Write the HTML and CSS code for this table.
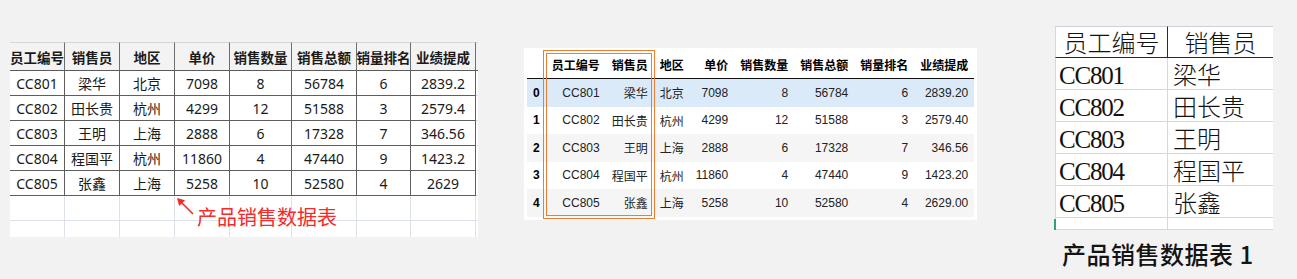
FILE: index.html
```html
<!DOCTYPE html>
<html lang="zh">
<head>
<meta charset="utf-8">
<title>产品销售数据表</title>
<link rel="stylesheet" href="styles.css">
</head>
<body>
<div class="page">
  <section class="xl">
    <div class="xl-grid">
      <div class="h">员工编号</div><div class="h">销售员</div><div class="h">地区</div><div class="h">单价</div><div class="h">销售数量</div><div class="h">销售总额</div><div class="h">销量排名</div><div class="h">业绩提成</div><div class="h hx"></div>
      <div class="d">CC801</div><div class="d">梁华</div><div class="d">北京</div><div class="d">7098</div><div class="d">8</div><div class="d">56784</div><div class="d">6</div><div class="d">2839.2</div><div class="e ex"></div>
      <div class="d">CC802</div><div class="d">田长贵</div><div class="d">杭州</div><div class="d">4299</div><div class="d">12</div><div class="d">51588</div><div class="d">3</div><div class="d">2579.4</div><div class="e ex"></div>
      <div class="d">CC803</div><div class="d">王明</div><div class="d">上海</div><div class="d">2888</div><div class="d">6</div><div class="d">17328</div><div class="d">7</div><div class="d">346.56</div><div class="e ex"></div>
      <div class="d">CC804</div><div class="d">程国平</div><div class="d">杭州</div><div class="d">11860</div><div class="d">4</div><div class="d">47440</div><div class="d">9</div><div class="d">1423.2</div><div class="e ex"></div>
      <div class="d">CC805</div><div class="d">张鑫</div><div class="d">上海</div><div class="d">5258</div><div class="d">10</div><div class="d">52580</div><div class="d">4</div><div class="d">2629</div><div class="e ex"></div>
      <div class="e"></div><div class="e"></div><div class="e"></div><div class="e"></div><div class="e"></div><div class="e"></div><div class="e"></div><div class="e"></div><div class="e ex"></div>
      <div class="e"></div><div class="e"></div><div class="e"></div><div class="e"></div><div class="e"></div><div class="e"></div><div class="e"></div><div class="e"></div><div class="e ex"></div>
    </div>
    <svg class="xl-arrow" width="20" height="20" viewBox="0 0 20 20">
      <line x1="4" y1="4" x2="17" y2="17" stroke="#f02a2a" stroke-width="1.6"/>
      <polygon points="1,1 9,3.2 3.2,9" fill="#f02a2a"/>
    </svg>
    <div class="xl-label">产品销售数据表</div>
  </section>

  <section class="pd">
    <table class="df">
      <thead>
        <tr><th></th><th>员工编号</th><th>销售员</th><th>地区</th><th>单价</th><th>销售数量</th><th>销售总额</th><th>销量排名</th><th>业绩提成</th></tr>
      </thead>
      <tbody>
        <tr class="hl"><th>0</th><td>CC801</td><td>梁华</td><td>北京</td><td>7098</td><td>8</td><td>56784</td><td>6</td><td>2839.20</td></tr>
        <tr><th>1</th><td>CC802</td><td>田长贵</td><td>杭州</td><td>4299</td><td>12</td><td>51588</td><td>3</td><td>2579.40</td></tr>
        <tr><th>2</th><td>CC803</td><td>王明</td><td>上海</td><td>2888</td><td>6</td><td>17328</td><td>7</td><td>346.56</td></tr>
        <tr><th>3</th><td>CC804</td><td>程国平</td><td>杭州</td><td>11860</td><td>4</td><td>47440</td><td>9</td><td>1423.20</td></tr>
        <tr><th>4</th><td>CC805</td><td>张鑫</td><td>上海</td><td>5258</td><td>10</td><td>52580</td><td>4</td><td>2629.00</td></tr>
      </tbody>
    </table>
    <div class="sel"></div>
  </section>

  <section class="ss-wrap">
    <div class="ss">
      <div class="sh c1">员工编号</div><div class="sh c2">销售员</div>
      <div class="sd c1 code">CC801</div><div class="sd c2">梁华</div>
      <div class="sd c1 code">CC802</div><div class="sd c2">田长贵</div>
      <div class="sd c1 code">CC803</div><div class="sd c2">王明</div>
      <div class="sd c1 code">CC804</div><div class="sd c2">程国平</div>
      <div class="sd c1 code">CC805</div><div class="sd c2">张鑫</div>
      <div class="sd c1 cur"></div><div class="sd c2"></div>
    </div>
    <div class="ss-cap">产品销售数据表 1</div>
  </section>
</div>
</body>
</html>
```

FILE: styles.css
```css
html, body {
  margin: 0;
  padding: 0;
}
body {
  background: #f2f2f2;
  width: 1297px;
  height: 279px;
  overflow: hidden;
}
.page {
  display: flex;
  align-items: flex-start;
  padding-left: 10px;
}

/* ---------- left: Excel sheet ---------- */
.xl {
  position: relative;
  margin-top: 42px;
  width: 468px;
  height: 195px;
  background: #fff;
  overflow: hidden;
}
.xl-grid {
  display: grid;
  grid-template-columns: 55px 55px 55px 55px 62px 65px 54px 65px 2px;
  grid-template-rows: 29px repeat(7, 25px);
  font-family: "Noto Sans", "Noto Sans CJK SC", sans-serif;
  font-size: 14px;
  color: #1a1a1a;
}
.xl-grid > div {
  box-sizing: border-box;
  display: flex;
  align-items: center;
  justify-content: center;
  white-space: nowrap;
}
.h {
  background: #f3f3f3;
  border-top: 1px solid #d6d6d6;
  border-right: 1px solid #6e6e6e;
  border-bottom: 1px solid #5a5a5a;
  font-family: "Noto Sans CJK SC", sans-serif;
  font-weight: 700;
  font-size: 13.5px;
}
.h.hx {
  border-right: none;
  background: #f3f3f3;
}
.d {
  border-right: 1px solid #5e5e5e;
  border-bottom: 1px solid #5e5e5e;
}
.e {
  border-right: 1px solid #dde1ea;
  border-bottom: 1px solid #dde1ea;
}
.e.ex {
  border-right: none;
}
.xl-arrow {
  position: absolute;
  left: 166px;
  top: 155px;
}
.xl-label {
  position: absolute;
  left: 187px;
  top: 163px;
  font-family: "Noto Sans CJK SC", sans-serif;
  font-size: 20px;
  line-height: 24px;
  color: #f52a2a;
}

/* ---------- middle: pandas DataFrame ---------- */
.pd {
  position: relative;
  box-sizing: border-box;
  margin-left: 46px;
  margin-top: 48px;
  width: 453px;
  height: 172px;
  padding: 3px 0 0 3px;
  background: #fff;
}
.df {
  border-collapse: collapse;
  border-spacing: 0;
  font-family: "Liberation Sans", "Noto Sans CJK SC", sans-serif;
  font-size: 12px;
  color: #222;
}
.df th, .df td {
  padding: 0 6px;
  text-align: right;
  white-space: nowrap;
  vertical-align: middle;
}
.df thead th {
  height: 27px;
  border-bottom: 1px solid #111;
  font-family: "Noto Sans CJK SC", sans-serif;
  font-weight: 700;
  color: #000;
}
.df tbody th {
  font-weight: 700;
  color: #000;
}
.df tbody tr {
  height: 27px;
}
.df tbody tr:nth-child(odd) {
  height: 28px;
  background: #f5f5f5;
}
.df tbody tr.hl {
  background: #dbeaf9;
}
.sel {
  position: absolute;
  left: 19px;
  top: 2px;
  width: 112px;
  height: 169px;
  box-sizing: border-box;
  border: 1px solid #ee7d31;
}
.sel::after {
  content: "";
  position: absolute;
  inset: 2px;
  border: 1px solid #ee7d31;
}

/* ---------- right: zoomed sheet ---------- */
.ss-wrap {
  margin-left: 78px;
  margin-top: 26px;
  display: flex;
  flex-direction: column;
}
.ss {
  display: grid;
  grid-template-columns: 113px 105px;
  grid-template-rows: repeat(6, 32px) 12px;
  background: #fff;
  font-family: "Liberation Serif", "Noto Sans CJK SC", serif;
  font-size: 24px;
  font-weight: 300;
  color: #111;
}
.ss > div {
  box-sizing: border-box;
  display: flex;
  align-items: flex-end;
  white-space: nowrap;
  line-height: 26px;
  border-bottom: 1px solid #d3d8e2;
  position: relative;
}
.ss .c1 {
  border-left: 1px solid #d3d8e2;
  border-right: 1px solid #d3d8e2;
}
.sh {
  justify-content: center;
  border-top: 1px solid #c9cfdb;
}
.ss > .sh {
  border-bottom: 1px solid #2a2a2a;
}
.ss > .sh.c1 {
  border-right: 1px solid #2a2a2a;
}
.sd.c1 {
  padding-left: 3px;
}
.sd.c2 {
  padding-left: 5px;
}
.code {
  letter-spacing: -1.2px;
  font-size: 25px;
}
.cur::before {
  content: "";
  position: absolute;
  left: -2px;
  top: 1px;
  width: 2px;
  height: 11px;
  background: #2fa36e;
}
.ss-cap {
  margin-top: 10px;
  padding-left: 7px;
  font-family: "Noto Sans CJK SC", sans-serif;
  font-size: 24px;
  line-height: 28px;
  font-weight: 500;
  color: #141414;
  letter-spacing: 0.5px;
}
```
